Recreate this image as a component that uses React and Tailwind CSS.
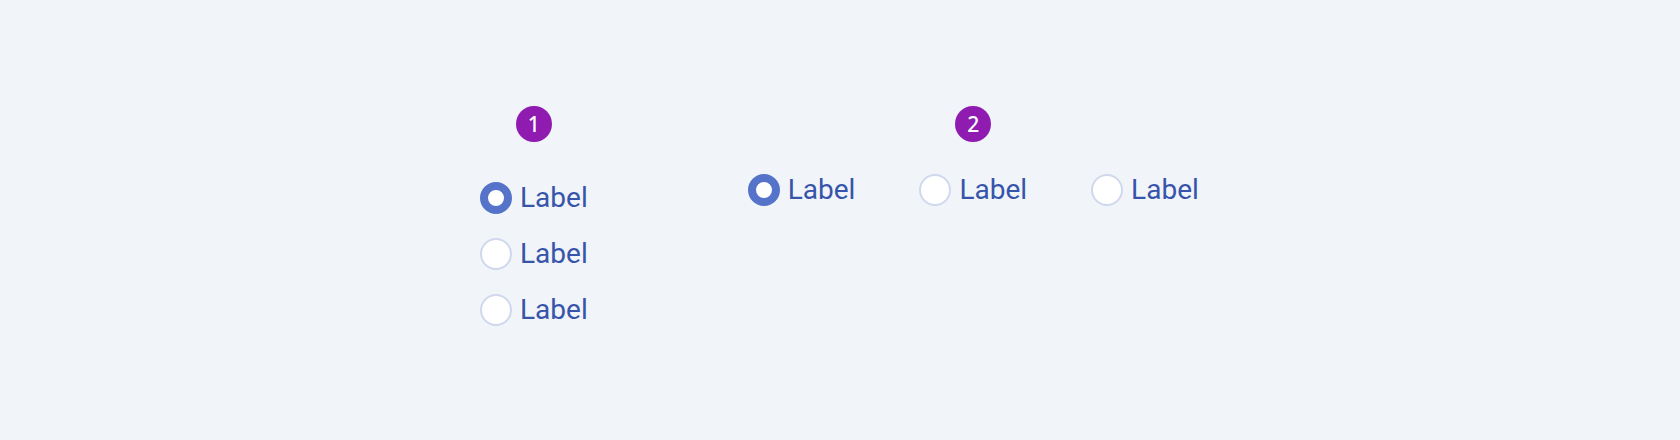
import React, { useState } from "react";

const Badge = ({ n }) => (
  <div className="flex h-9 w-9 items-center justify-center rounded-full bg-[#8f1bb0] text-[21px] font-medium leading-none text-white [font-family:'Noto_Sans',sans-serif]">
    {n}
  </div>
);

const Radio = ({ checked, label, onClick }) => (
  <button type="button" onClick={onClick} className="flex h-8 items-center gap-2">
    <span
      className={
        checked
          ? "box-border h-8 w-8 rounded-full border-[8px] border-[#5573c9] bg-white"
          : "box-border h-8 w-8 rounded-full border-2 border-[#cfd8ec] bg-white"
      }
    />
    <span className="text-[28px] leading-8 text-[#3654aa] [font-family:Roboto,sans-serif]">{label}</span>
  </button>
);

export default function App() {
  const [vertical, setVertical] = useState(0);
  const [horizontal, setHorizontal] = useState(0);

  return (
    <div className="flex h-[440px] w-full items-start bg-[#f1f5fa] pl-[480px] pt-[106px]">
      {/* 1: stacked */}
      <div className="flex flex-col items-center">
        <Badge n="1" />
        <div className="mt-[40px] flex flex-col gap-6">
          {[0, 1, 2].map((i) => (
            <Radio key={i} label="Label" checked={vertical === i} onClick={() => setVertical(i)} />
          ))}
        </div>
      </div>

      {/* 2: inline */}
      <div className="ml-[160px] flex flex-col items-center">
        <Badge n="2" />
        <div className="mt-[32px] flex gap-[64px]">
          {[0, 1, 2].map((i) => (
            <Radio key={i} label="Label" checked={horizontal === i} onClick={() => setHorizontal(i)} />
          ))}
        </div>
      </div>
    </div>
  );
}
